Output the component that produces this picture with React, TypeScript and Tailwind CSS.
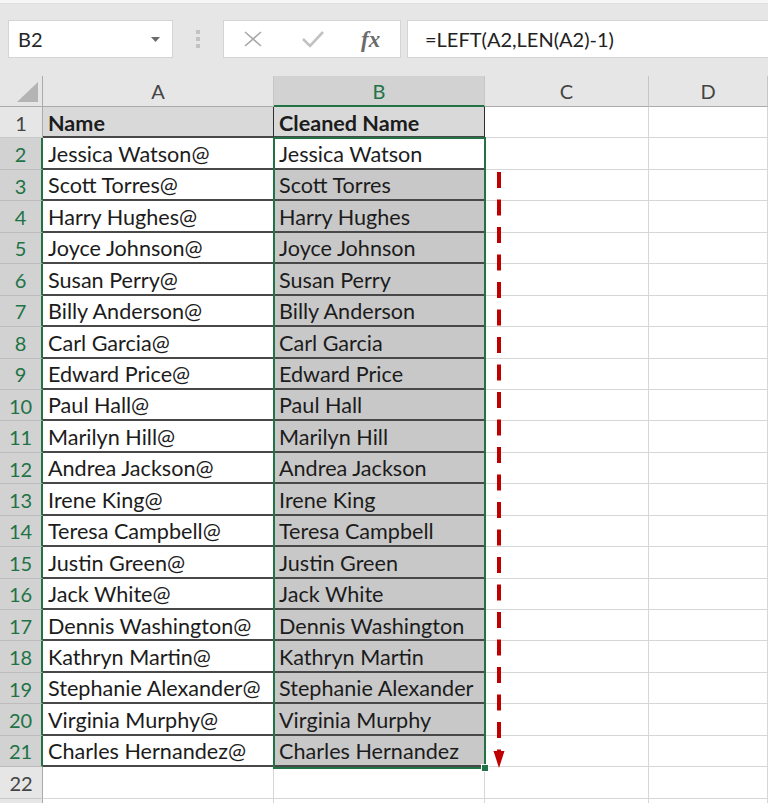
import { Fragment } from "react";

const names = [
  "Jessica Watson",
  "Scott Torres",
  "Harry Hughes",
  "Joyce Johnson",
  "Susan Perry",
  "Billy Anderson",
  "Carl Garcia",
  "Edward Price",
  "Paul Hall",
  "Marilyn Hill",
  "Andrea Jackson",
  "Irene King",
  "Teresa Campbell",
  "Justin Green",
  "Jack White",
  "Dennis Washington",
  "Kathryn Martin",
  "Stephanie Alexander",
  "Virginia Murphy",
  "Charles Hernandez",
];

const font = { fontFamily: "Lato, 'Open Sans', sans-serif" };

const FormulaBar = () => (
  <div className="h-[76px] bg-[#e6e6e6] flex flex-col">
    <div className="h-[4px] bg-[#f6f6f6] border-b border-[#e0e0e0]" />
    <div className="flex items-center pt-[16px] pl-[8px]">
      <div className="w-[165px] h-[38px] bg-white border border-[#d4d4d4] flex items-center justify-between pl-[9px] pr-[12px]">
        <span className="text-[20px] text-[#262626]">B2</span>
        <svg width="9" height="5" viewBox="0 0 9 5">
          <polygon points="0,0 9,0 4.5,5" fill="#6b6b6b" />
        </svg>
      </div>
      <div className="w-[50px] flex flex-col items-center gap-[3px]">
        <span className="w-[4px] h-[4px] bg-[#c2c2c2]" />
        <span className="w-[4px] h-[4px] bg-[#c2c2c2]" />
        <span className="w-[4px] h-[4px] bg-[#c2c2c2]" />
      </div>
      <div className="w-[178px] h-[38px] bg-white border border-[#d4d4d4] flex items-center">
        <svg className="ml-[19px]" width="20" height="16" viewBox="0 0 20 16">
          <path d="M2 1 L18 15 M18 1 L2 15" stroke="#a8a8a8" strokeWidth="1.6" fill="none" />
        </svg>
        <svg className="ml-[38px]" width="24" height="18" viewBox="0 0 24 18">
          <path d="M2 9 L9 16 L22 2" stroke="#c2c2c2" strokeWidth="2.6" fill="none" />
        </svg>
        <span
          className="ml-[36px] text-[23px] italic font-bold text-[#6b6b6b] leading-none"
          style={{ fontFamily: "'Liberation Serif', 'DejaVu Serif', serif" }}
        >
          fx
        </span>
      </div>
      <div className="ml-[6px] flex-1 h-[38px] bg-white border border-[#d4d4d4] border-r-0 flex items-center pl-[17px]">
        <span className="text-[20px] text-[#222]">=LEFT(A2,LEN(A2)-1)</span>
      </div>
    </div>
  </div>
);

const HeaderRow = () => (
  <>
    <div className="bg-[#e6e6e6] border-r border-b border-[#ababab] flex items-end justify-end pr-[4px] pb-[4px]">
      <svg width="21" height="20" viewBox="0 0 21 20">
        <polygon points="21,0 21,20 0,20" fill="#b4b4b4" />
      </svg>
    </div>
    {["A", "B", "C", "D"].map((c) => (
      <div
        key={c}
        className={
          c === "B"
            ? "bg-[#d2d2d2] border-r border-[#c6c6c6] border-b-2 border-b-[#217346] flex items-center justify-center text-[20px] text-[#217346]"
            : "bg-[#e6e6e6] border-r border-[#c6c6c6] border-b border-b-[#ababab] flex items-center justify-center text-[20px] text-[#444]"
        }
      >
        {c}
      </div>
    ))}
  </>
);

const Row = ({ n }: { n: number }) => {
  const selected = n >= 2 && n <= 21;
  const inTable = n <= 21;
  const header = n === 1;
  const a = header ? "Name" : inTable ? names[n - 2] + "@" : "";
  const b = header ? "Cleaned Name" : inTable ? names[n - 2] : "";

  const rowHead = selected
    ? "bg-[#d2d2d2] text-[#217346] border-r-2 border-r-[#217346] border-b border-b-[#bcbcbc]"
    : "bg-[#e6e6e6] text-[#444] border-r border-r-[#ababab] border-b border-b-[#c8c8c8]";

  const dataCell = "flex items-center px-[5px] pt-[2px] text-[21.6px] text-[#1c1c1c] whitespace-nowrap overflow-hidden";
  const tableBorder = "border-r border-r-[#2e2e2e] border-b-2 border-b-[#484848]";
  const gridBorder = "border-r border-r-[#d6d6d6] border-b border-b-[#d6d6d6]";

  const aBg = header ? "bg-[#d9d9d9] font-bold" : "bg-white";
  const bBg = header ? "bg-[#d9d9d9] font-bold" : n === 2 ? "bg-white" : "bg-[#c8c8c8]";

  return (
    <>
      <div className={`flex items-center justify-center text-[20px] pt-[1px] ${rowHead}`}>{n <= 22 ? n : ""}</div>
      <div className={`${dataCell} ${inTable ? `${aBg} ${tableBorder}` : `bg-white ${gridBorder}`}`}>{a}</div>
      <div className={`${dataCell} ${inTable ? `${bBg} ${tableBorder}` : `bg-white ${gridBorder}`}`}>{b}</div>
      <div className={`bg-white ${gridBorder}`} />
      <div className={`bg-white ${gridBorder}`} />
    </>
  );
};

export default function App() {
  const rows = Array.from({ length: 23 }, (_, i) => i + 1);
  return (
    <div className="relative w-[768px] h-[803px] overflow-hidden bg-white" style={font}>
      <FormulaBar />
      <div className="grid grid-cols-[43px_231px_211px_164px_1fr] grid-rows-[31px] auto-rows-[31.45px]">
        <HeaderRow />
        {rows.map((n) => (
          <Fragment key={n}>
            <Row n={n} />
          </Fragment>
        ))}
      </div>

      {/* selection outline B2:B21 + fill handle */}
      <div className="absolute left-[273px] top-[137px] w-[213px] h-[632px] border-2 border-[#217346] pointer-events-none" />
      <div className="absolute left-[481px] top-[764px] w-[8px] h-[8px] bg-[#217346] border border-white pointer-events-none" />

      {/* red dashed arrow */}
      <svg className="absolute left-[493px] top-[172px] pointer-events-none" width="12" height="597" viewBox="0 0 12 597">
        <line x1="6" y1="0" x2="6" y2="580" stroke="#c00000" strokeWidth="4" strokeDasharray="16 11.5" />
        <polygon points="0.5,579 11.5,579 6,596" fill="#c00000" />
      </svg>
    </div>
  );
}
